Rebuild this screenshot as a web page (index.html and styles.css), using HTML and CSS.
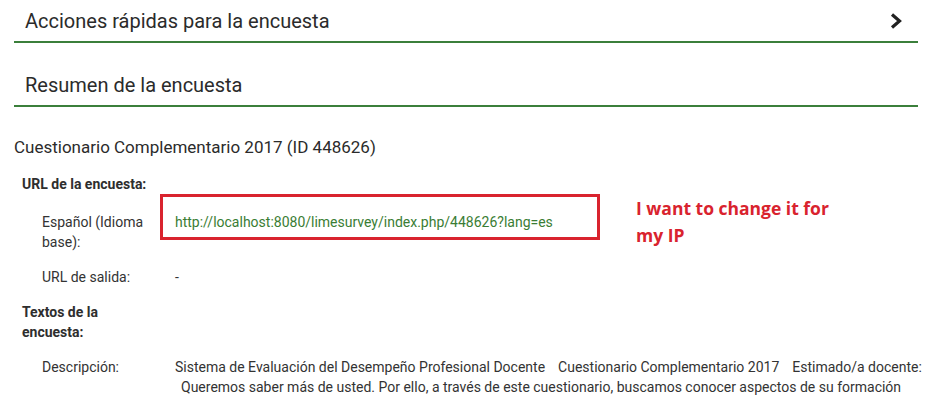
FILE: index.html
```html
<!DOCTYPE html>
<html lang="es">
<head>
<meta charset="utf-8">
<title>Resumen de la encuesta</title>
<link rel="stylesheet" href="styles.css">
</head>
<body>
<div class="page">
  <div class="panel-head">
    <h2 class="panel-title">Acciones rápidas para la encuesta</h2>
    <svg class="chev" width="12" height="16" viewBox="0 0 12 16"><path d="M2 1.5 L9.5 8 L2 14.5" fill="none" stroke="#222" stroke-width="3.2"/></svg>
  </div>
  <div class="panel-head second">
    <h2 class="panel-title">Resumen de la encuesta</h2>
  </div>

  <h3 class="survey-title">Cuestionario Complementario 2017 (ID 448626)</h3>

  <div class="summary">
    <div class="section-label">URL de la encuesta:</div>
    <div class="row url-row">
      <div class="label">Español (Idioma base):</div>
      <div class="value"><a class="link" href="#">http://localhost:8080/limesurvey/index.php/448626?lang=es</a></div>
      <div class="annot-box"></div>
      <div class="annot-text">I want to change it for<br>my IP</div>
    </div>
    <div class="row">
      <div class="label">URL de salida:</div>
      <div class="value">-</div>
    </div>
    <div class="section-label narrow">Textos de la encuesta:</div>
    <div class="row">
      <div class="label">Descripción:</div>
      <div class="value desc">
        <div class="line"><span>Sistema de Evaluación del Desempeño Profesional Docente</span><span>Cuestionario Complementario 2017</span><span>Estimado/a docente:</span></div>
        <div class="line indent">Queremos saber más de usted. Por ello, a través de este cuestionario, buscamos conocer aspectos de su formación</div>
      </div>
    </div>
  </div>
</div>
</body>
</html>
```
FILE: styles.css
```css
html, body {
  margin: 0;
  padding: 0;
  background: #fff;
}
body {
  font-family: Roboto, "Liberation Sans", sans-serif;
  color: #333;
  overflow: hidden;
}
.page {
  width: 904px;
  margin-left: 14px;
}
.panel-head {
  display: flex;
  align-items: center;
  justify-content: space-between;
  height: 41px;
  border-bottom: 2px solid #3b7f3b;
  padding: 0 16px 0 11px;
}
.panel-head.second {
  margin-top: 21px;
}
.panel-title {
  margin: 0;
  font-size: 20px;
  font-weight: 400;
  color: #2b2b2b;
}
.chev {
  display: block;
}
.survey-title {
  margin: 30px 0 0 0;
  font-size: 17px;
  font-weight: 400;
  color: #2b2b2b;
  line-height: 20px;
}
.summary {
  margin-top: 17px;
  font-size: 14px;
  line-height: 20px;
}
.section-label {
  font-weight: 700;
  padding-left: 8px;
  color: #2e2e2e;
}
.section-label.narrow {
  width: 110px;
  margin-top: 15px;
}
.row {
  display: grid;
  grid-template-columns: 133px 1fr;
  padding-left: 28px;
  margin-top: 15px;
  position: relative;
}
.url-row {
  margin-top: 18px;
}
.label {
  width: 112px;
}
.link {
  color: #3a7d34;
  text-decoration: none;
}
.desc .line {
  white-space: nowrap;
}
.desc .line span + span {
  margin-left: 13px;
}
.desc .indent {
  padding-left: 6px;
}
.annot-box {
  position: absolute;
  left: 146px;
  top: -18px;
  width: 434px;
  height: 40px;
  border: 3px solid #d9232e;
}
.annot-text {
  position: absolute;
  left: 622px;
  top: -17px;
  font-family: "Open Sans", "Liberation Sans", sans-serif;
  font-weight: 700;
  font-size: 17.5px;
  line-height: 27px;
  color: #d9232e;
}
```
